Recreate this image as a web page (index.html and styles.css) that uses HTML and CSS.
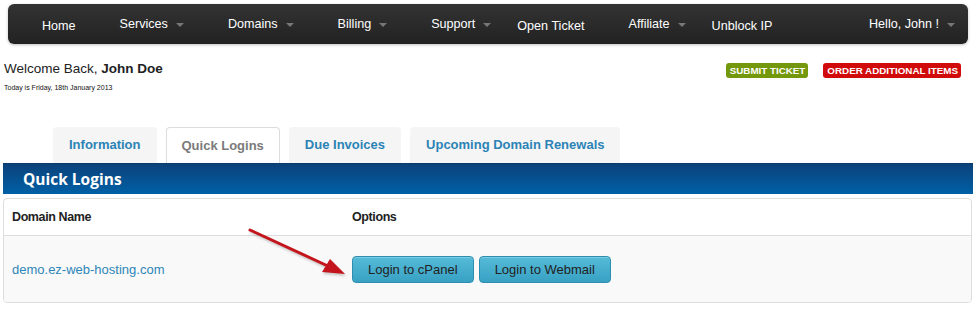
FILE: index.html
```html
<!DOCTYPE html>
<html lang="en">
<head>
    <meta charset="UTF-8">
    <title>Client Area - Quick Logins</title>
    <link rel="stylesheet" href="styles.css">
</head>
<body>
    <nav class="navbar">
        <ul class="nav-list">
            <li class="nav-item">Home</li>
            <li class="nav-item has-menu">Services<span class="caret"></span></li>
            <li class="nav-item has-menu">Domains<span class="caret"></span></li>
            <li class="nav-item has-menu">Billing<span class="caret"></span></li>
            <li class="nav-item has-menu">Support<span class="caret"></span></li>
            <li class="nav-item">Open Ticket</li>
            <li class="nav-item has-menu">Affiliate<span class="caret"></span></li>
            <li class="nav-item">Unblock IP</li>
            <li class="nav-item has-menu nav-user">Hello, John !<span class="caret"></span></li>
        </ul>
    </nav>

    <div class="page">
        <div class="welcome-row">
            <div>
                <div class="welcome">Welcome Back, <strong>John Doe</strong></div>
                <div class="today">Today is Friday, 18th January 2013</div>
            </div>
            <div class="badges">
                <a class="badge badge-green" href="#">SUBMIT TICKET</a>
                <a class="badge badge-red" href="#">ORDER ADDITIONAL ITEMS</a>
            </div>
        </div>

        <ul class="tabs">
            <li class="tab">Information</li>
            <li class="tab active">Quick Logins</li>
            <li class="tab">Due Invoices</li>
            <li class="tab">Upcoming Domain Renewals</li>
        </ul>

        <div class="panel-title">Quick Logins</div>

        <div class="login-table">
            <div class="row head">
                <div class="col-domain">Domain Name</div>
                <div class="col-options">Options</div>
            </div>
            <div class="row body">
                <div class="col-domain"><a href="#">demo.ez-web-hosting.com</a></div>
                <div class="col-options">
                    <button type="button" class="btn-info">Login to cPanel</button>
                    <button type="button" class="btn-info">Login to Webmail</button>
                </div>
            </div>
        </div>

        <svg class="pointer" width="120" height="60" viewBox="0 0 120 60">
            <line x1="4" y1="4" x2="84" y2="41" stroke="#c4151c" stroke-width="3" stroke-linecap="round"/>
            <polygon points="99,48 76,46 84,33" fill="#c4151c"/>
        </svg>
    </div>
</body>
</html>
```

FILE: styles.css
```css
body {
    margin: 0;
    font-family: "Liberation Sans", Arial, sans-serif;
    color: #222;
    background: #fff;
}
.navbar {
    margin: 4px 10px 0 8px;
    height: 40px;
    border-radius: 6px;
    background: linear-gradient(#333, #222);
    box-shadow: 0 1px 3px rgba(0,0,0,0.25);
}
.nav-list {
    list-style: none;
    margin: 0;
    padding: 0 0 0 20px;
    height: 100%;
    display: flex;
    align-items: center;
}
.nav-item {
    color: #fff;
    font-size: 12.6px;
    padding: 3px 12px 0 14px;
    display: flex;
    align-items: center;
}
.nav-item.has-menu {
    padding: 0 12px 0 32px;
}
.nav-item.nav-user {
    margin-left: auto;
    padding-right: 13px;
}
.caret {
    display: inline-block;
    margin-left: 8px;
    margin-top: 2px;
    border-top: 4px solid #777;
    border-left: 4px solid transparent;
    border-right: 4px solid transparent;
}
.page {
    position: relative;
    padding: 0 3px;
}
.welcome-row {
    display: flex;
    justify-content: space-between;
    align-items: flex-start;
    margin-top: 16px;
    padding-left: 1px;
}
.welcome {
    font-size: 13.5px;
    line-height: 18px;
}
.today {
    font-size: 7px;
    line-height: 10px;
    margin-top: 5px;
    color: #111;
}
.badges {
    display: flex;
    gap: 15px;
    margin-top: 3px;
    margin-right: 14px;
}
.badge {
    color: #fff;
    font-size: 9.8px;
    font-weight: 700;
    line-height: 11px;
    padding: 2px 3px 2px 4px;
    border-radius: 3px;
    text-decoration: none;
}
.badge-green {
    background: #74980c;
}
.badge-red {
    background: #d10a0a;
}
.tabs {
    list-style: none;
    display: flex;
    gap: 9px;
    margin: 34px 0 0 0;
    padding: 0 0 0 50px;
}
.tab {
    height: 36px;
    line-height: 35px;
    padding: 0 16px;
    font-size: 13px;
    font-weight: 700;
    color: #2b83b6;
    background: #f5f5f5;
    border-radius: 4px 4px 0 0;
    box-sizing: border-box;
}
.tab.active {
    background: #fff;
    color: #7a7a7a;
    border: 1px solid #ddd;
    border-bottom: none;
    padding: 0 15px;
}
.panel-title {
    height: 31px;
    line-height: 30px;
    margin-right: 2px;
    padding-left: 20px;
    color: #fff;
    font-family: "Open Sans", "Liberation Sans", sans-serif;
    font-size: 15.5px;
    font-weight: 700;
    background: linear-gradient(#0b427a, #0060a6);
    border-top: 1px solid #083a6a;
    box-sizing: border-box;
}
.login-table {
    margin: 4px 3px 6px 0;
    border: 1px solid #ddd;
    border-radius: 4px;
    overflow: hidden;
}
.row {
    display: flex;
    align-items: center;
}
.row.head {
    height: 37px;
    font-size: 12.5px;
    font-weight: 700;
    letter-spacing: -0.4px;
    border-bottom: 1px solid #ddd;
    box-sizing: border-box;
}
.row.body {
    height: 66px;
    background: #f9f9f9;
}
.col-domain {
    width: 340px;
    padding-left: 8px;
}
.col-domain a {
    color: #2d86b8;
    font-size: 13px;
    text-decoration: none;
}
.col-options {
    display: flex;
    gap: 5px;
}
.btn-info {
    height: 27px;
    padding: 0 15px;
    font-family: "Liberation Sans", Arial, sans-serif;
    font-size: 13px;
    color: #222;
    background: linear-gradient(#55bbd8, #38a1c3);
    border: 1px solid #2d8fb0;
    border-radius: 4px;
    box-shadow: inset 0 1px 0 rgba(255,255,255,0.25);
    cursor: pointer;
}
.pointer {
    position: absolute;
    left: 246px;
    top: 166px;
    filter: drop-shadow(1px 2px 1px rgba(0,0,0,0.2));
}
```
